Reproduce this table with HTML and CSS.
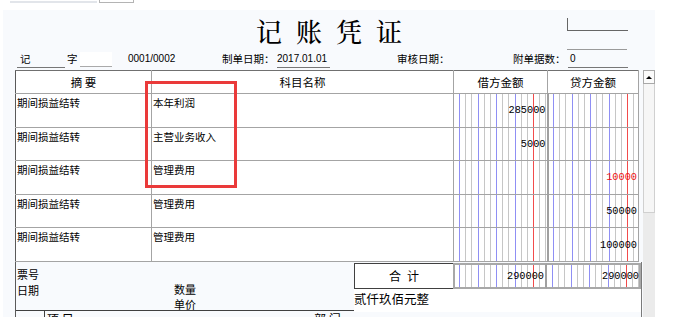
FILE: index.html
```html
<!DOCTYPE html>
<html lang="zh">
<head>
  <meta charset="UTF-8">
  <title>记账凭证</title>
  <link rel="stylesheet" href="styles.css">
</head>
<body>

  <div class="topstrip"><span class="tline"></span><span class="tbox"></span></div>

  <div class="panel">
    <div class="title-row">
      <span></span>
      <h1 class="title">记账凭证</h1>
      <div class="stamp"><div class="stamp-a"></div><div class="stamp-b"></div></div>
    </div>

    <div class="info">
      <span class="f-ji">记</span>
      <span class="f-zi">字</span>
      <span class="f-blank"></span>
      <span></span>
      <span class="f-num">0001/0002</span>
      <span class="f-label">制单日期：</span>
      <span class="f-date">2017.01.01</span>
      <span></span>
      <span class="f-label">审核日期：</span>
      <span class="f-label">附单据数：</span>
      <span class="f-count">0</span>
    </div>

    <div class="work">
      <div class="sheet">
        <table class="voucher">
          <colgroup>
            <col class="c-sum"><col class="c-acc"><col class="c-dr"><col class="c-cr">
          </colgroup>
          <tr class="head">
            <th>摘 要</th><th>科目名称</th><th>借方金额</th><th>贷方金额</th>
          </tr>
          <tr>
            <td class="txt">期间损益结转</td><td class="txt">本年利润</td>
            <td class="amt dr">285000</td><td class="amt cr"></td>
          </tr>
          <tr>
            <td class="txt">期间损益结转</td><td class="txt">主营业务收入</td>
            <td class="amt dr">5000</td><td class="amt cr"></td>
          </tr>
          <tr>
            <td class="txt">期间损益结转</td><td class="txt">管理费用</td>
            <td class="amt dr"></td><td class="amt cr neg">10000</td>
          </tr>
          <tr>
            <td class="txt">期间损益结转</td><td class="txt">管理费用</td>
            <td class="amt dr"></td><td class="amt cr">50000</td>
          </tr>
          <tr>
            <td class="txt">期间损益结转</td><td class="txt">管理费用</td>
            <td class="amt dr"></td><td class="amt cr">100000</td>
          </tr>
        </table>

        <!-- highlight box drawn over the account column -->
        <div class="mark"></div>

        <div class="foot">
          <div class="foot-top">
            <div class="bill">
              <div class="bill-a"><span>票号</span><span>日期</span></div>
              <div class="bill-b"><span>数量</span><span>单价</span></div>
            </div>
            <div class="totals">
              <div class="sum-label">合计</div>
              <div class="amt-box dr-total">290000</div>
              <div class="amt-box cr-total">290000</div>
              <div class="words">贰仟玖佰元整</div>
            </div>
          </div>
          <div class="foot-bottom">
            <span class="fb-gap"></span>
            <span class="fb-item">项 目</span>
            <span class="fb-item">部 门</span>
          </div>
        </div>
      </div>

      <div class="scroll">
        <div class="scroll-up"><span class="arrow"></span></div>
        <div class="scroll-thumb"></div>
      </div>
    </div>
  </div>

</body>
</html>
```

FILE: styles.css
```css
html, body {
  margin: 0;
  padding: 0;
}

body {
  width: 673px;
  height: 317px;
  overflow: hidden;
  background: #fff;
  font-family: "Noto Sans CJK SC", sans-serif;
  font-size: 10.5px;
  color: #000;
}

.topstrip {
  height: 10px;
  display: flex;
  align-items: flex-start;
  padding-left: 10px;
}

.tline {
  width: 87px;
  height: 2px;
  margin-top: 1px;
  background: #e2e5ea;
}

.tbox {
  width: 33px;
  height: 2px;
  margin-left: 2px;
  border: 1px solid #b4b4b4;
  border-top: none;
  background: #fff;
}

.panel {
  margin-left: 3px;
  width: 652px;
  height: 307px;
  background: #f8fafd;
  overflow: hidden;
}

.title-row {
  display: grid;
  grid-template-columns: 1fr auto 1fr;
  height: 42px;
}

.title {
  margin: 0;
  padding-top: 6px;
  padding-left: 14px;
  font-family: "Noto Serif CJK SC", "Noto Sans CJK SC", serif;
  font-size: 26px;
  font-weight: 500;
  line-height: 30px;
  letter-spacing: 14px;
}

.stamp {
  justify-self: end;
  margin-right: 27px;
  padding-top: 8px;
}

.stamp-a {
  width: 60px;
  height: 12px;
  border-left: 1px solid #666;
  border-bottom: 1px solid #666;
}

.stamp-b {
  width: 60px;
  height: 18px;
  border-bottom: 1px solid #9a9a9a;
}

.info {
  display: grid;
  grid-template-columns: 48px 15px 32px 16px 94px 55px 55px 65px 116px 55px 60px;
  padding-left: 14px;
  height: 16px;
  line-height: 14px;
}

.f-ji {
  padding-left: 3px;
  border-bottom: 1px solid #777;
}

.f-zi {
  padding-left: 2px;
}

.f-blank {
  height: 14px;
  background: #fff;
  border-bottom: 1px solid #aaa;
}

.f-num,
.f-date,
.f-count {
  font-family: "Liberation Sans", sans-serif;
  font-size: 10px;
}

.f-date {
  margin-right: 2px;
  border-bottom: 1px solid #777;
}

.f-count {
  padding-left: 2px;
  border-bottom: 1px solid #777;
}

.work {
  display: flex;
  margin-top: 2px;
}

.sheet {
  position: relative;
  width: 627px;
  margin-left: 12px;
}

.voucher {
  border-collapse: collapse;
  table-layout: fixed;
  width: 623px;
  background: #fff;
}

.c-sum { width: 136px; }
.c-acc { width: 302px; }
.c-dr  { width: 94px; }
.c-cr  { width: 91px; }

.voucher th,
.voucher td {
  padding: 0;
  border: 1px solid #a4a4a4;
}

.voucher th:first-child,
.voucher td:first-child {
  border-left-color: #5a5a5a;
}

.voucher td:nth-child(2) {
  border-left-color: #707070;
}

.voucher th {
  height: 22px;
  font-size: 11.5px;
  font-weight: normal;
  border-top-color: #707070;
}

.voucher tr:not(.head) {
  height: 33.6px;
}

.txt {
  vertical-align: top;
  padding: 2px 0 0 1px !important;
  line-height: 14px;
}

.amt {
  vertical-align: middle;
  text-align: right;
  padding-right: 1px !important;
  font-family: "Liberation Mono", monospace;
  font-size: 10.28px;
  background-repeat: no-repeat;
}

.dr,
.dr-total {
  border-right: 2px solid #a0a0a0 !important;
}

.dr,
.cr,
.dr-total,
.cr-total {
  background-image:
    linear-gradient(to right, transparent 74px, #f24b4b 74px, #f24b4b 75px, transparent 75px),
    repeating-linear-gradient(to right, #8f8ff4 0, #8f8ff4 1px, transparent 1px, transparent 18.51px),
    repeating-linear-gradient(to right, #c6c6c6 0, #c6c6c6 1px, transparent 1px, transparent 6.17px);
  background-repeat: no-repeat;
}

.dr { background-position: 5px 0, 5px 0, 5px 0; }
.cr { background-position: 4px 0, 4px 0, 4px 0; }

.neg {
  color: #f01010;
}

.mark {
  position: absolute;
  left: 130px;
  top: 11px;
  width: 92px;
  height: 107px;
  box-sizing: border-box;
  border: 3px solid #ea3a3a;
}

.foot {
  box-sizing: border-box;
  width: 627px;
  border-left: 1px solid #5a5a5a;
  border-right: 1px solid #7a7a7a;
}

.foot-top {
  display: grid;
  grid-template-columns: 338px 1fr;
  height: 48px;
  border-bottom: 1px solid #404040;
}

.bill {
  display: grid;
  grid-template-columns: 157px auto;
  padding-left: 1px;
  font-size: 11px;
}

.bill-a,
.bill-b {
  display: flex;
  flex-direction: column;
}

.bill-a {
  padding-top: 4px;
  line-height: 16px;
}

.bill-b {
  padding-top: 20px;
  line-height: 15px;
}

.totals {
  display: grid;
  grid-template-columns: 99px 94px 1fr;
  grid-template-rows: 26px 1fr;
  padding-top: 1px;
}

.sum-label {
  box-sizing: border-box;
  border: 1px solid #404040;
  border-right: none;
  font-size: 12px;
  letter-spacing: 6px;
  line-height: 23px;
  text-align: center;
  padding-left: 6px;
  background: #fff;
}

.amt-box {
  box-sizing: border-box;
  border: 2px solid #a8a8a8;
  background-color: #fff;
  font-family: "Liberation Mono", monospace;
  font-size: 10.28px;
  line-height: 22px;
  text-align: right;
}

.dr-total {
  padding-right: 1px;
  background-position: 4px 0, 4px 0, 4px 0;
}

.cr-total {
  border-left: none;
  background-position: 5px 0, 5px 0, 5px 0;
}

.words {
  grid-column: 1 / -1;
  font-size: 12.5px;
  line-height: 20px;
  background: #fff;
}

.foot-bottom {
  display: grid;
  grid-template-columns: 29px 267px auto;
  height: 20px;
  font-size: 12px;
  line-height: 16px;
}

.fb-gap {
  border-right: 1px solid #404040;
}

.fb-item {
  padding-left: 2px;
}

.scroll {
  width: 12px;
  height: 247px;
  margin-left: 1px;
  background: #ebebeb;
}

.scroll-up {
  box-sizing: border-box;
  height: 14px;
  border: 1px solid #a8a8a8;
  background: #fbfbfb;
  display: flex;
  align-items: center;
  justify-content: center;
}

.arrow {
  width: 0;
  height: 0;
  border-left: 3px solid transparent;
  border-right: 3px solid transparent;
  border-bottom: 3px solid #000;
}

.scroll-thumb {
  box-sizing: border-box;
  height: 129px;
  border: 1px solid #d0d0d0;
  border-top: none;
  background: #f6f6f6;
}
```
